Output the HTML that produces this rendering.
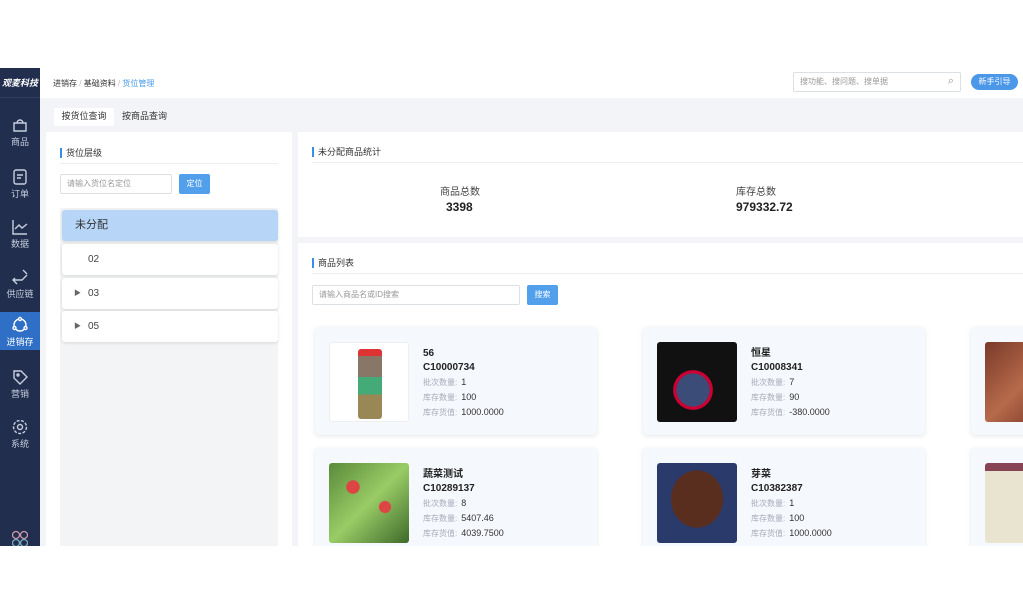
<!DOCTYPE html>
<html><head><meta charset="utf-8"><style>
*{margin:0;padding:0;box-sizing:border-box}
body{width:1023px;height:614px;background:#fff;font-family:"Liberation Sans","Noto Sans CJK SC",sans-serif;position:relative;overflow:hidden;color:#333}
.app{position:absolute;left:0;top:68px;width:1023px;height:478px;background:#f2f4f7;overflow:hidden}
.side{position:absolute;left:0;top:0;width:40px;height:478px;background:#222e4e;color:#c7cede;font-size:9px;text-align:center}
.logo{height:30px;line-height:30px;font-size:9px;font-style:italic;color:#fff;font-weight:bold;border-bottom:1px solid #33405e}
.item{position:absolute;left:0;width:40px;height:36px}
.item svg{display:block;margin:4px auto 1px}
.act{background:#2f6fc6;color:#fff}
.top{position:absolute;left:40px;top:0;right:0;height:30px;background:#fff;font-size:8px}
.tabs{position:absolute;left:40px;top:30px;right:0;height:28px;background:#f2f4f7;font-size:9px}
.panel{position:absolute;background:#fff}
.ttl{font-size:9px;color:#333;border-left:2px solid #3a8ee6;padding-left:4px;line-height:10px}
.inp{position:absolute;border:1px solid #dcdfe6;background:#fff;font-size:8px;color:#999;padding-left:6px;border-radius:2px}
.btn{position:absolute;background:#52a0eb;color:#fff;font-size:8px;text-align:center;border-radius:2px}
.node{position:absolute;left:62px;width:216px;height:31px;background:#fff;border-radius:3px;box-shadow:0 1px 3px rgba(0,0,0,.12);font-size:10px;line-height:31px;padding-left:26px;color:#444}
.card{position:absolute;width:282px;height:108px;background:#f5f8fc;border-radius:4px;box-shadow:0 1px 4px rgba(0,0,0,.1)}
.img{position:absolute;left:14px;top:15px;width:80px;height:80px;border-radius:3px}
.info{position:absolute;left:108px;top:20px;font-size:8px;line-height:14px;color:#aab}
.info b{display:block;color:#222;font-size:10px;font-weight:bold;line-height:14px}
.info span{color:#333;font-size:9px;margin-left:4px}
</style></head><body>
<div class="app">
 <div class="side">
  <div class="logo">观麦科技</div>
  <div class="item" style="top:44px"><svg width="18" height="18" viewBox="0 0 18 18" fill="none" stroke="#c7cede" stroke-width="1.4"><path d="M3 7h12v8H3z M6 7a3 3 0 0 1 6 0"/></svg>商品</div>
  <div class="item" style="top:96px"><svg width="18" height="18" viewBox="0 0 18 18" fill="none" stroke="#c7cede" stroke-width="1.4"><rect x="3" y="2" width="12" height="14" rx="2"/><path d="M6 7h6M6 10h4"/></svg>订单</div>
  <div class="item" style="top:146px"><svg width="18" height="18" viewBox="0 0 18 18" fill="none" stroke="#c7cede" stroke-width="1.4"><path d="M2 2v14h14M4 11l4-4 3 3 5-4"/></svg>数据</div>
  <div class="item" style="top:196px"><svg width="18" height="18" viewBox="0 0 18 18" fill="none" stroke="#c7cede" stroke-width="1.4"><path d="M4 10l-2 2 4 4M2 12h9l5-5M12 2l4 4"/></svg>供应链</div>
  <div class="item act" style="top:244px;height:38px"><svg width="18" height="18" viewBox="0 0 18 18" fill="none" stroke="#fff" stroke-width="1.4"><circle cx="9" cy="9" r="6"/><circle cx="9" cy="3" r="1.5" fill="#2f6fc6"/><circle cx="3.5" cy="12" r="1.5" fill="#2f6fc6"/><circle cx="14.5" cy="12" r="1.5" fill="#2f6fc6"/></svg>进销存</div>
  <div class="item" style="top:296px"><svg width="18" height="18" viewBox="0 0 18 18" fill="none" stroke="#c7cede" stroke-width="1.4"><path d="M3 3h7l6 6-7 7-6-6z"/><circle cx="7" cy="7" r="1"/></svg>营销</div>
  <div class="item" style="top:346px"><svg width="18" height="18" viewBox="0 0 18 18" fill="none" stroke="#c7cede" stroke-width="1.4"><circle cx="9" cy="9" r="6.5" stroke-dasharray="3 1.5"/><circle cx="9" cy="9" r="2.5"/></svg>系统</div>
  <div style="position:absolute;top:462px;left:12px;width:16px;height:16px"><svg width="16" height="16"><circle cx="4" cy="5" r="3.5" fill="none" stroke="#c9a" stroke-width="1.3"/><circle cx="12" cy="5" r="3.5" fill="none" stroke="#c9a" stroke-width="1.3"/><circle cx="4" cy="13" r="3.5" fill="none" stroke="#7ab" stroke-width="1.3"/><circle cx="12" cy="13" r="3.5" fill="none" stroke="#7ab" stroke-width="1.3"/></svg></div>
 </div>
 <div class="top">
  <div style="position:absolute;left:13px;top:10px;color:#333">进销存 <span style="color:#bbb">/</span> 基础资料 <span style="color:#bbb">/</span> <span style="color:#4a9be8">货位管理</span></div>
  <div class="inp" style="left:753px;top:4px;width:168px;height:20px;line-height:18px">搜功能、搜问题、搜单据<span style="position:absolute;right:6px;top:-1px;color:#999;font-size:11px">⌕</span></div>
  <div style="position:absolute;left:931px;top:6px;width:47px;height:16px;border-radius:8px;background:#4b98e8;color:#fff;text-align:center;line-height:16px;font-size:8px">新手引导</div>
 </div>
 <div class="tabs">
  <div style="position:absolute;left:14px;top:10px;width:60px;height:18px;background:#fff;text-align:center;line-height:16px">按货位查询</div>
  <div style="position:absolute;left:82px;top:10px;line-height:16px">按商品查询</div>
 </div>
 <div class="panel" style="left:46px;top:64px;width:246px;height:420px">
  <div class="ttl" style="position:absolute;left:14px;top:16px">货位层级</div>
  <div style="position:absolute;left:14px;top:31px;width:218px;border-top:1px solid #eee"></div>
  <div class="inp" style="left:14px;top:42px;width:112px;height:20px;line-height:18px">请输入货位名定位</div>
  <div class="btn" style="left:133px;top:42px;width:31px;height:20px;line-height:20px">定位</div>
  <div style="position:absolute;left:14px;top:76px;width:218px;height:344px;background:#f3f4f6"></div>
 </div>
 <div class="node" style="top:142px;background:#b6d5f7;color:#333;padding-left:13px;font-size:11px">未分配</div>
 <div class="node" style="top:176px">02</div>
 <div class="node" style="top:210px"><span style="position:absolute;left:12px;font-size:7px;color:#666">▶</span>03</div>
 <div class="node" style="top:243px"><span style="position:absolute;left:12px;font-size:7px;color:#666">▶</span>05</div>
 <div class="panel" style="left:298px;top:64px;width:725px;height:105px">
  <div class="ttl" style="position:absolute;left:14px;top:15px">未分配商品统计</div>
  <div style="position:absolute;left:14px;top:30px;right:0;border-top:1px solid #eee"></div>
  <div style="position:absolute;left:142px;top:51px;font-size:10px;color:#444">商品总数</div>
  <div style="position:absolute;left:148px;top:68px;font-size:12px;font-weight:bold;color:#222">3398</div>
  <div style="position:absolute;left:438px;top:51px;font-size:10px;color:#444">库存总数</div>
  <div style="position:absolute;left:438px;top:68px;font-size:12px;font-weight:bold;color:#222">979332.72</div>
 </div>
 <div class="panel" style="left:298px;top:175px;width:725px;height:310px">
  <div class="ttl" style="position:absolute;left:14px;top:15px">商品列表</div>
  <div style="position:absolute;left:14px;top:30px;right:0;border-top:1px solid #eee"></div>
  <div class="inp" style="left:14px;top:42px;width:208px;height:20px;line-height:18px">请输入商品名或ID搜索</div>
  <div class="btn" style="left:229px;top:42px;width:31px;height:20px;line-height:20px">搜索</div>
 </div>
 <div class="card" style="left:315px;top:259px"><div class="img" style="background:#fff;border:1px solid #eee"><div style="position:absolute;left:28px;top:6px;width:24px;height:70px;border-radius:3px;background:linear-gradient(#d33 0 10%,#876 10% 40%,#4a7 40% 65%,#985 65%)"></div></div><div class="info"><b>56</b><b>C10000734</b>批次数量:<span>1</span><br>库存数量:<span>100</span><br>库存货值:<span>1000.0000</span></div></div>
 <div class="card" style="left:643px;top:259px"><div class="img" style="background:radial-gradient(circle at 45% 60%,#3b4c78 0 25%,#c03 26% 30%,#111 31%)"></div><div class="info"><b>恒星</b><b>C10008341</b>批次数量:<span>7</span><br>库存数量:<span>90</span><br>库存货值:<span>-380.0000</span></div></div>
 <div class="card" style="left:971px;top:259px"><div class="img" style="background:linear-gradient(135deg,#7a3a2a,#b66a4a,#6a2a20)"></div></div>
 <div class="card" style="left:315px;top:380px"><div class="img" style="background:radial-gradient(circle at 30% 30%,#d44 0 8%,transparent 9%),radial-gradient(circle at 70% 55%,#d44 0 8%,transparent 9%),linear-gradient(135deg,#5a8a3a,#9c6,#3d6a2a)"></div><div class="info"><b>蔬菜测试</b><b>C10289137</b>批次数量:<span>8</span><br>库存数量:<span>5407.46</span><br>库存货值:<span>4039.7500</span></div></div>
 <div class="card" style="left:643px;top:380px"><div class="img" style="background:radial-gradient(ellipse at 50% 45%,#5a2e1e 0 45%,#2a3a6a 47%)"></div><div class="info"><b>芽菜</b><b>C10382387</b>批次数量:<span>1</span><br>库存数量:<span>100</span><br>库存货值:<span>1000.0000</span></div></div>
 <div class="card" style="left:971px;top:380px"><div class="img" style="background:linear-gradient(#845 0 10%,#e8e4d0 10%)"></div></div>
</div>
</body></html>
